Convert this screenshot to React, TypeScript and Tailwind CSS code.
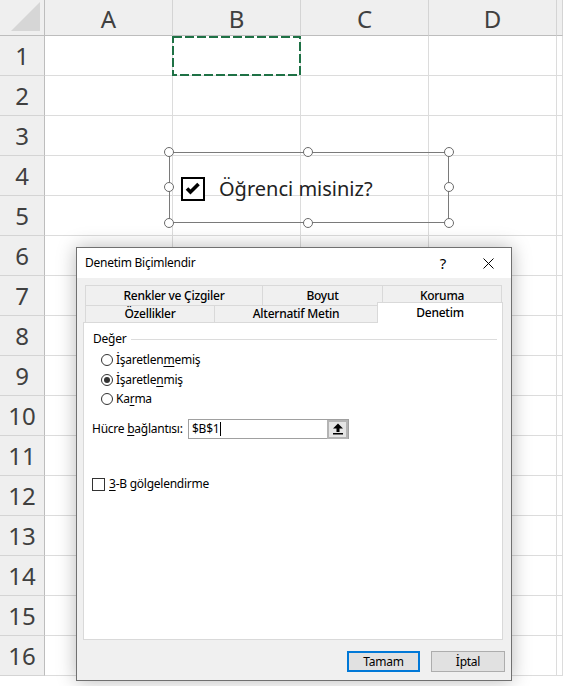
import React from 'react';

const COLS = ['A', 'B', 'C', 'D', ''];
const ROWS = Array.from({ length: 16 }, (_, i) => i + 1);

function Handle({ className }: { className: string }) {
    return <div className={`absolute w-[10px] h-[10px] rounded-full border-[1.5px] border-[#6b6b6b] bg-white ${className}`} />;
}

function Radio({ checked }: { checked?: boolean }) {
    return (
        <div className="w-[12px] h-[12px] rounded-full border border-[#333] bg-white flex items-center justify-center">
            {checked && <div className="w-[6px] h-[6px] rounded-full bg-[#333]" />}
        </div>
    );
}

export default function App() {
    return (
        <div className="relative w-[563px] h-[686px] overflow-hidden bg-white font-['Noto_Sans',sans-serif]">
            {/* sheet */}
            <div className="grid grid-cols-[45px_128px_128px_128px_128px_1fr] grid-rows-[36px_repeat(16,40px)]">
                <div className="bg-[#efefef] border-r border-b border-[#bdbdbd] flex items-end justify-end pr-[3px] pb-[3px]">
                    <svg width="30" height="30" viewBox="0 0 30 30">
                        <polygon points="29,0 29,29 0,29" fill="#d6d6d6" />
                    </svg>
                </div>
                {COLS.map((c, i) => (
                    <div key={i} className="bg-[#efefef] border-b border-b-[#bdbdbd] border-r border-r-[#d4d4d4] flex items-center justify-center pt-[2px] text-[24px] text-[#404040]">
                        {c}
                    </div>
                ))}
                {ROWS.map((r) => (
                    <React.Fragment key={r}>
                        <div className="bg-[#efefef] border-r border-r-[#bdbdbd] border-b border-b-[#d4d4d4] flex items-center justify-center text-[24px] text-[#404040]">
                            {r}
                        </div>
                        {COLS.map((c, i) => (
                            <div key={i} className="border-r border-b border-[#dcdcdc]" />
                        ))}
                    </React.Fragment>
                ))}
            </div>

            {/* copy marquee around B1 */}
            <svg className="absolute left-[172px] top-[36px]" width="129" height="40">
                <rect x="1" y="1" width="127" height="38" fill="none" stroke="#1e7145" strokeWidth="2" strokeDasharray="9 3" />
            </svg>

            {/* form control */}
            <div className="absolute left-[169px] top-[152px] w-[280px] h-[71px] border border-[#7a7a7a]">
                <div className="flex items-center h-full pl-[11px] pt-[2px]">
                    <div className="w-[24px] h-[24px] border-2 border-black bg-white flex items-center justify-center">
                        <svg width="20" height="20" viewBox="0 0 20 20">
                            <path d="M4 9.5 L7.5 13 L15.5 5" fill="none" stroke="#000" strokeWidth="3.6" />
                        </svg>
                    </div>
                    <span className="ml-[14px] text-[20px] text-[#222] leading-none">Öğrenci misiniz?</span>
                </div>
                <Handle className="-left-[6px] -top-[6px]" />
                <Handle className="left-[133px] -top-[6px]" />
                <Handle className="-right-[6px] -top-[6px]" />
                <Handle className="-left-[6px] top-[29px]" />
                <Handle className="-right-[6px] top-[29px]" />
                <Handle className="-left-[6px] -bottom-[6px]" />
                <Handle className="left-[133px] -bottom-[6px]" />
                <Handle className="-right-[6px] -bottom-[6px]" />
            </div>

            {/* dialog */}
            <div className="absolute left-[76px] top-[247px] w-[436px] h-[434px] border border-[#707070] bg-[#f0f0f0] shadow-[0_0_18px_rgba(0,0,0,0.28)] flex flex-col text-[12px] tracking-[-0.25px] text-black">
                <div className="h-[30px] shrink-0 bg-white flex items-center pl-[8px]">
                    <span>Denetim Biçimlendir</span>
                    <span className="ml-auto w-[46px] text-center text-[15px]">?</span>
                    <div className="w-[45px] flex justify-center">
                        <svg width="11" height="11" viewBox="0 0 11 11">
                            <path d="M0.5 0.5 L10.5 10.5 M10.5 0.5 L0.5 10.5" stroke="#000" strokeWidth="1" />
                        </svg>
                    </div>
                </div>

                <div className="flex-1 flex flex-col pl-[6px] pr-[8px] pt-[7px]">
                    {/* tabs */}
                    <div className="ml-[2px] flex flex-col font-medium">
                        <div className="flex h-[20px]">
                            <div className="w-[177px] border-t border-l border-[#d9d9d9] text-center leading-[16px] pt-[2px]">Renkler ve Çizgiler</div>
                            <div className="w-[120px] border-t border-l border-[#d9d9d9] text-center leading-[16px] pt-[2px]">Boyut</div>
                            <div className="w-[120px] border-t border-l border-r border-[#d9d9d9] text-center leading-[16px] pt-[2px]">Koruma</div>
                        </div>
                        <div className="flex h-[17px] items-end">
                            <div className="w-[129px] h-[17px] border-t border-l border-[#d9d9d9] text-center leading-[16px]">Özellikler</div>
                            <div className="w-[163px] h-[17px] border-t border-l border-[#d9d9d9] text-center leading-[16px]">Alternatif Metin</div>
                            <div className="relative z-10 w-[126px] h-[21px] -mb-px bg-white border-t border-l border-r border-[#d9d9d9] text-center leading-[16px] pt-[2px]">Denetim</div>
                        </div>
                    </div>

                    {/* panel */}
                    <div className="h-[318px] shrink-0 bg-white border border-[#d9d9d9] flex flex-col">
                        <div className="flex items-center pl-[9px] pr-[5px] pt-[8px] leading-[16px]">
                            <span>Değer</span>
                            <div className="flex-1 ml-[5px] h-px bg-[#dcdcdc]" />
                        </div>
                        <div className="flex flex-col pl-[17px] mt-[3px]">
                            <div className="h-[20px] flex items-center gap-[3px]">
                                <Radio />
                                <span>İşaretlen<span className="underline underline-offset-2">m</span>emiş</span>
                            </div>
                            <div className="h-[19px] flex items-center gap-[3px]">
                                <Radio checked />
                                <span>İşaretle<span className="underline underline-offset-2">n</span>miş</span>
                            </div>
                            <div className="h-[20px] flex items-center gap-[3px]">
                                <Radio />
                                <span>Ka<span className="underline underline-offset-2">r</span>ma</span>
                            </div>
                        </div>
                        <div className="flex items-center h-[20px] mt-[10px] pl-[8px]">
                            <span className="w-[96px]">Hücre <span className="underline underline-offset-2">b</span>ağlantısı:</span>
                            <div className="w-[161px] h-[20px] border border-[#a0a0a0] bg-white flex items-center">
                                <span className="pl-[3px] flex-1 flex items-center">
                                    $B$1<span className="inline-block w-px h-[14px] bg-black ml-[1px]" />
                                </span>
                                <div className="w-[21px] h-[19px] border-2 border-[#b4b4b4] bg-[#e5e5e5] flex items-center justify-center">
                                    <svg width="10" height="12" viewBox="0 0 10 12">
                                        <polygon points="5,0.5 10,5.5 0,5.5" fill="#000" />
                                        <rect x="3.5" y="5" width="3" height="4" fill="#000" />
                                        <rect x="0" y="10" width="10" height="1.5" fill="#000" />
                                    </svg>
                                </div>
                            </div>
                        </div>
                        <div className="flex items-center h-[16px] mt-[37px] pl-[8px] gap-[4px]">
                            <div className="w-[13px] h-[13px] border border-[#333] bg-white" />
                            <span><span className="underline underline-offset-2">3</span>-B gölgelendirme</span>
                        </div>
                    </div>

                    {/* buttons */}
                    <div className="flex justify-end gap-[11px] mt-[11px] -mr-[2px]">
                        <div className="w-[73px] h-[21px] border-2 border-[#0078d7] bg-[#e1e1e1] flex items-center justify-center">Tamam</div>
                        <div className="w-[74px] h-[21px] border border-[#adadad] bg-[#e1e1e1] flex items-center justify-center">İptal</div>
                    </div>
                </div>
            </div>
        </div>
    );
}
